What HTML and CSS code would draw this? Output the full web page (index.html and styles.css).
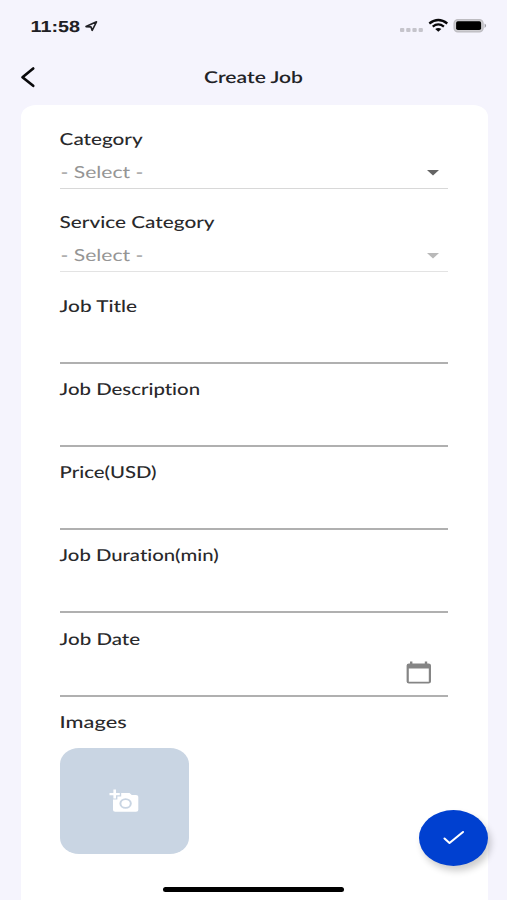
FILE: index.html
```html
<!DOCTYPE html>
<html lang="en">
<head>
<meta charset="utf-8">
<title>Create Job</title>
<link rel="stylesheet" href="styles.css">
</head>
<body>
<div class="screen">
  <header class="status">
    <svg class="clock" width="70" height="24"><text class="time" x="0.5" y="17" textLength="49.5" lengthAdjust="spacingAndGlyphs">11:58</text><path class="arrow" d="M56 11.6 66.5 6.8 62.2 15.4 61 11.9Z"/></svg>
    <svg class="signals" width="88" height="24" viewBox="0 0 88 24">
      <g fill="#c5c4cb"><rect x="0" y="13" width="4.3" height="4" rx="1"/><rect x="6.2" y="13" width="4.3" height="4" rx="1"/><rect x="12.4" y="13" width="4.3" height="4" rx="1"/><rect x="18.6" y="13" width="4.3" height="4" rx="1"/></g>
      <g fill="none" stroke="#08080a" stroke-width="2.3"><path d="M29.3 8.5Q38.3 1.5 47.3 8.5"/><path d="M32.7 11.6Q38.3 7.2 43.9 11.6"/></g>
      <path fill="#08080a" d="M35.2 14Q38.3 11.8 41.4 14L38.3 16.8Z"/>
      <rect x="54.1" y="4.6" width="29" height="12.3" rx="3.8" fill="#cfced2" stroke="#bdbcc1" stroke-width="1.3"/>
      <rect x="56.1" y="6.3" width="25" height="8.8" rx="1.8" fill="#000"/>
      <path d="M84.6 8.6Q87.6 10.7 84.6 12.9Z" fill="#99999f"/>
    </svg>
  </header>
  <nav class="bar">
    <svg class="back" width="20" height="24"><path d="M13.2 3.5 2.5 12.2 13.2 20.8"/></svg>
    <svg class="title" width="102" height="26"><text x="1" y="19" textLength="99" lengthAdjust="spacingAndGlyphs">Create Job</text></svg>
  </nav>
  <main class="card">
    <section class="field">
      <svg class="label"><text x="-.4" y="19.8" textLength="83" lengthAdjust="spacingAndGlyphs">Category</text></svg>
      <div class="select"><svg class="value"><text x="0.5" y="25.2" textLength="83" lengthAdjust="spacingAndGlyphs">- Select -</text></svg><svg class="caret" width="12" height="6"><path d="M0 0H12L6 5.6Z"/></svg></div>
    </section>
    <section class="field">
      <svg class="label"><text x="-.4" y="19.8" textLength="155" lengthAdjust="spacingAndGlyphs">Service Category</text></svg>
      <div class="select disabled"><svg class="value"><text x="0.5" y="25.2" textLength="83" lengthAdjust="spacingAndGlyphs">- Select -</text></svg><svg class="caret" width="12" height="6"><path d="M0 0H12L6 5.6Z"/></svg></div>
    </section>
    <section class="field">
      <svg class="label"><text x="-.4" y="19.8" textLength="77.5" lengthAdjust="spacingAndGlyphs">Job Title</text></svg>
      <div class="input"></div>
    </section>
    <section class="field">
      <svg class="label"><text x="-.4" y="19.8" textLength="140.5" lengthAdjust="spacingAndGlyphs">Job Description</text></svg>
      <div class="input"></div>
    </section>
    <section class="field">
      <svg class="label"><text x="-.4" y="19.8" textLength="97" lengthAdjust="spacingAndGlyphs">Price(USD)</text></svg>
      <div class="input"></div>
    </section>
    <section class="field">
      <svg class="label"><text x="-.4" y="19.8" textLength="159" lengthAdjust="spacingAndGlyphs">Job Duration(min)</text></svg>
      <div class="input"></div>
    </section>
    <section class="field">
      <svg class="label"><text x="-.4" y="19.8" textLength="80.5" lengthAdjust="spacingAndGlyphs">Job Date</text></svg>
      <div class="input"><svg class="calendar" width="26" height="24"><path fill="#858585" fill-rule="evenodd" d="M4 .5H6.4V2.5H18.8V.5H21.2V2.5H22.5Q25 2.5 25 4.6V20.6Q25 22.6 22.5 22.6H3Q.6 22.6 .6 20.6V4.6Q.6 2.5 3 2.5H4ZM2.8 7.4V20.7H22.8V7.4Z"/></svg></div>
    </section>
    <section class="images">
      <svg class="label"><text x="-.4" y="19.8" textLength="67" lengthAdjust="spacingAndGlyphs">Images</text></svg>
      <div class="upload"><svg width="30" height="24" viewBox="0 0 30 24"><path fill="#fff" d="M4.4 .6H7V4H10.8V6.3H7V9.6H4.4V6.3H.5V4H4.4Z"/><path fill="#fff" fill-rule="evenodd" d="M8.4 10.4V7.6H12.2V4.1H20.5L22.8 6H27Q29.3 6 29.3 7.8V21Q29.3 22.8 27 22.8H6.2Q4 22.8 4 21V10.4ZM16.6 9.3A6.2 5.2 0 1 0 16.6 19.7A6.2 5.2 0 1 0 16.6 9.3Z"/><ellipse cx="16.6" cy="14.5" rx="4.2" ry="3.5" fill="#fff"/></svg></div>
    </section>
  </main>
  <button class="submit" aria-label="Submit"><svg width="24" height="18"><path d="M2.5 9.5 7.5 14 21 3"/></svg></button>
  <div class="home"></div>
</div>
</body>
</html>
```
FILE: styles.css
```css
* { box-sizing: border-box; }
body { margin: 0; background: #f5f4fd; font-family: Lato, "Open Sans", sans-serif; font-variant-ligatures: none; text-rendering: geometricPrecision; }
svg { display: block; overflow: visible; }
.screen { position: relative; height: 900px; overflow: hidden; display: flex; flex-direction: column; }
.status { height: 52px; padding: 15px 19px 0 30px; display: flex; justify-content: space-between; }
.time { font: 700 16px "Liberation Sans", sans-serif; fill: #202024; }
.arrow { fill: none; stroke: #202024; stroke-width: 1.6; stroke-linejoin: round; }
.bar { height: 53px; padding: 12px 20px 0; display: grid; grid-template-columns: 20px 1fr 20px; }
.back { margin-top: 1px; fill: none; stroke: #09090b; stroke-width: 2.7; stroke-linecap: round; stroke-linejoin: round; }
.title { justify-self: center; font-size: 16.3px; font-weight: 600; fill: #222226; }
.card { flex: 1; margin: 0 19.5px 0 21px; padding: 20px 39.5px 0 38.5px; background: #fff; border-radius: 15px 15px 0 0 / 12px 12px 0 0; }
.field { height: 83.3px; }
.label { width: 100%; height: 28px; font-size: 16.5px; font-weight: 500; fill: #29292b; }
.select { height: 36px; padding-right: 9px; display: flex; justify-content: space-between; align-items: center; border-bottom: 1px solid #d8d8d8; }
.value { width: 90px; height: 36px; font-size: 16.5px; fill: #959595; }
.caret { fill: #646464; margin-top: 5px; }
.disabled .caret { fill: #b9b9b9; }
.disabled { border-color: #e3e3e3; }
.input { height: 44px; padding: 8px 16px 0 0; display: flex; justify-content: flex-end; border-bottom: 2px solid #b0b0b0; }
.upload { width: 129.5px; height: 106px; margin-top: 12px; border-radius: 19px / 16px; background: #c9d5e3; display: flex; align-items: center; justify-content: center; }
.submit { position: absolute; right: 19px; bottom: 34px; width: 69px; height: 56px; padding: 0; border: 0; border-radius: 50%; background: #0040d0; box-shadow: 3px 5px 7px rgba(0,0,0,.2); display: flex; align-items: center; justify-content: center; }
.submit path { fill: none; stroke: #fff; stroke-width: 2.1; stroke-linecap: round; stroke-linejoin: round; }
.home { position: absolute; left: 163px; bottom: 8px; width: 181px; height: 5px; border-radius: 3px; background: #000; }
```
